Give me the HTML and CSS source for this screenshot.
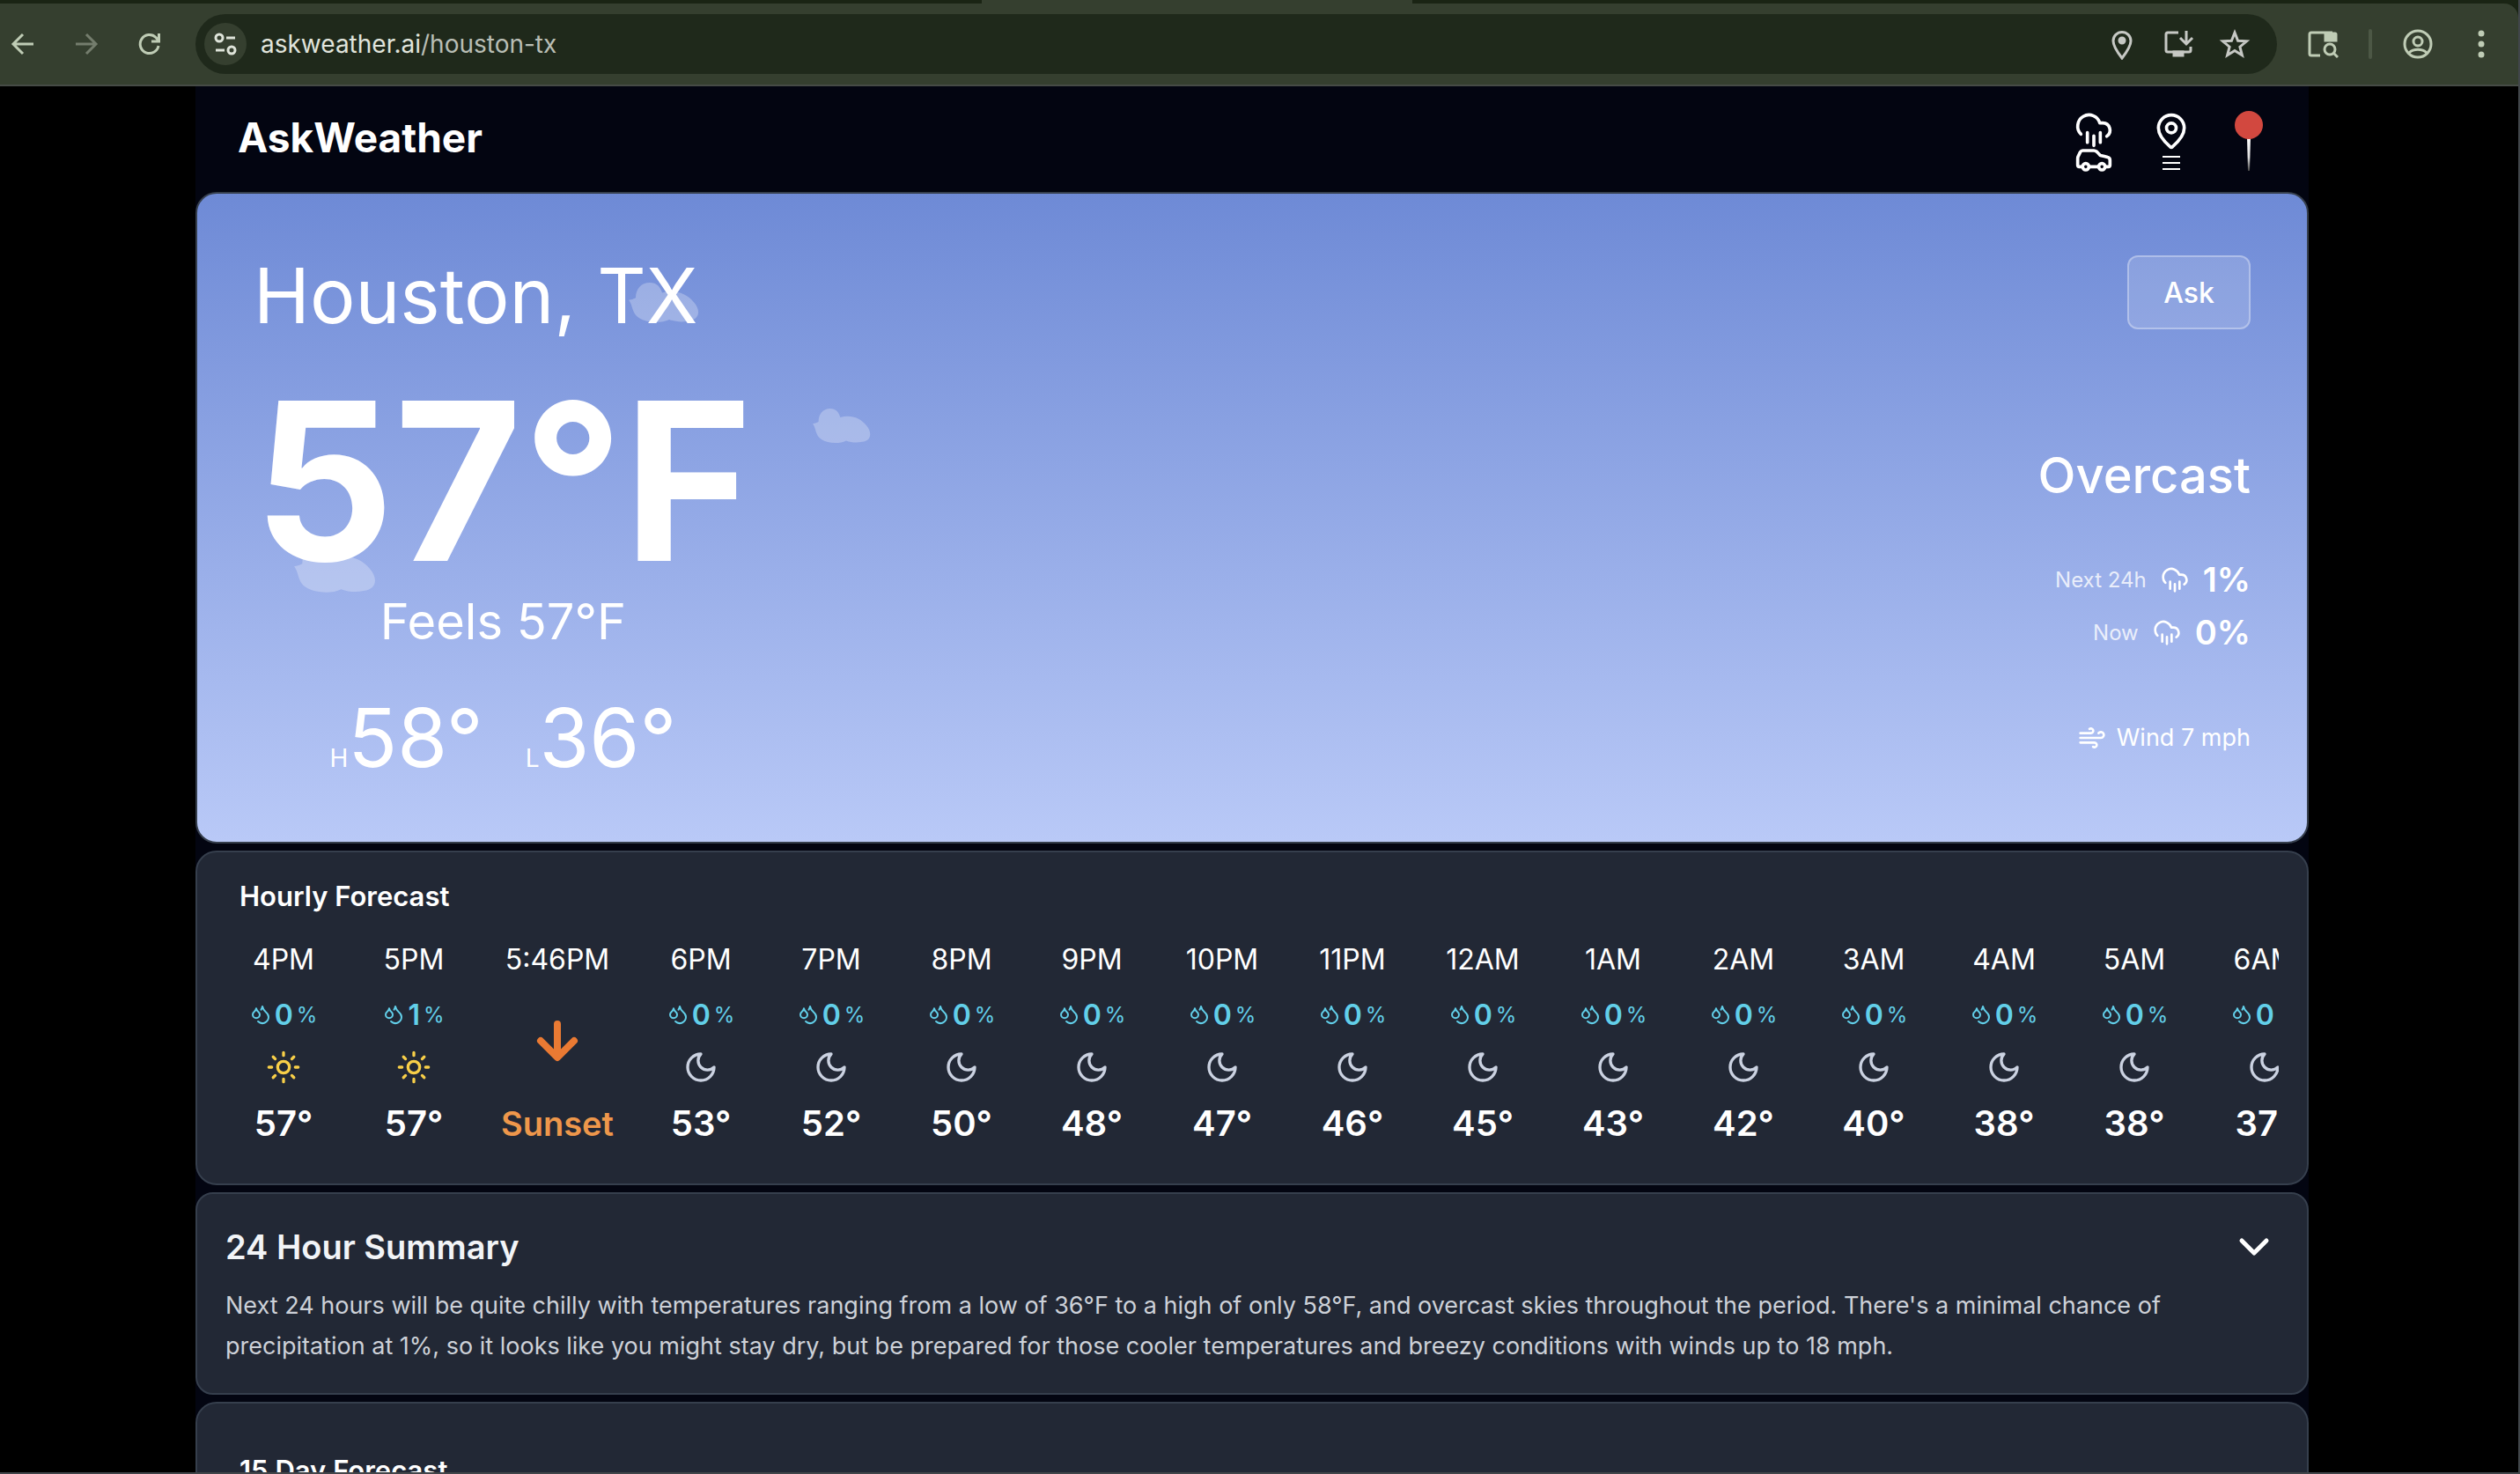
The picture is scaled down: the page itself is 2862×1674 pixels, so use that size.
FILE: index.html
```html
<!DOCTYPE html>
<html lang="en">
<head>
<meta charset="utf-8">
<title>AskWeather - Houston, TX</title>
<link rel="stylesheet" href="styles.css">
</head>
<body>
<svg class="sprite" aria-hidden="true">
  <symbol id="rain" viewBox="0 0 24 24"><path d="M4 14.899A7 7 0 1 1 15.71 8h1.79a4.5 4.5 0 0 1 2.5 8.242M16 14v6M8 14v6M12 16v6"/></symbol>
  <symbol id="drops" viewBox="0 0 24 24"><path d="M7 16.3c2.2 0 4-1.83 4-4.05 0-1.16-.57-2.26-1.71-3.19S7.29 6.75 7 5.3c-.29 1.45-1.14 2.84-2.29 3.76S3 11.1 3 12.25c0 2.22 1.8 4.05 4 4.05zM12.56 6.6A10.97 10.97 0 0 0 14 3.02c.5 2.5 2 4.9 4 6.5s3 3.5 3 5.5a6.98 6.98 0 0 1-11.91 4.97"/></symbol>
  <symbol id="sun" viewBox="0 0 24 24"><circle cx="12" cy="12" r="4"/><path d="M12 2v2M12 20v2M4.93 4.93l1.41 1.41M17.66 17.66l1.41 1.41M2 12h2M20 12h2M6.34 17.66l-1.41 1.41M19.07 4.93l-1.41 1.41"/></symbol>
  <symbol id="moon" viewBox="0 0 24 24"><path d="M12 3a6 6 0 0 0 9 9 9 9 0 1 1-9-9Z"/></symbol>
  <symbol id="cloud" viewBox="0 0 80 56" preserveAspectRatio="none"><path d="M0 24Q4 24 8 21C8 9 14 0 24 0C32 0 36 6 38 14C52 9 66 15 74 27C82 38 81 51 68 53C60 55 53 54 46 51C36 57 20 55 12 49C3 42 5 31 0 24Z"/></symbol>
</svg>

<div class="browser">
  <div class="tabstrip"><span class="tab"></span></div>
  <nav class="toolbar" aria-label="Browser">
    <button class="tool" aria-label="Back"><svg viewBox="0 0 32 32"><path d="M28 16H6M16 5L5 16l11 11"/></svg></button>
    <button class="tool dim" aria-label="Forward"><svg viewBox="0 0 32 32"><path d="M4 16h22M16 5l11 11-11 11"/></svg></button>
    <button class="tool reload" aria-label="Reload"><svg viewBox="0 0 32 32"><path d="M26 18A10.500 10.500 0 1 1 23 8.500L26 12M26.500 4v9H18"/></svg></button>
    <div class="omnibox">
      <button class="site" aria-label="Site information"><svg viewBox="0 0 32 32"><circle cx="9" cy="9" r="4"/><path d="M17 9h10M5 23h10"/><circle cx="23" cy="23" r="4"/></svg></button>
      <span class="url">askweather.ai<span class="path">/houston-tx</span></span>
      <button class="tool grey" aria-label="Location"><svg viewBox="0 0 36 36"><path d="M18 34C11 25 8 20 8 14.500a10 10 0 0 1 20 0C28 20 25 25 18 34Z"/><circle class="solid" cx="18" cy="14" r="3"/></svg></button>
      <button class="tool grey" aria-label="Install"><svg viewBox="0 0 36 36"><path d="M18 5H6a2 2 0 0 0-2 2v18a2 2 0 0 0 2 2h24a2 2 0 0 0 2-2v-4M27 3v13M20 11l7 7 7-7"/><path class="solid" d="M13 27h10v4H13z"/></svg></button>
      <button class="tool grey" aria-label="Bookmark"><svg viewBox="0 0 36 36"><path d="M18 5l3.600 9.200 9.900.6-7.600 6.400 2.500 9.600L18 25.500l-8.400 5.300 2.500-9.600-7.600-6.400 9.900-.6z"/></svg></button>
    </div>
    <button class="tool side" aria-label="Search page"><svg viewBox="0 0 36 36"><path d="M15 31H5a2 2 0 0 1-2-2V7a2 2 0 0 1 2-2h24"/><path class="solid" d="M21 6h11a1 1 0 0 1 1 1v7H21z"/><circle cx="26" cy="24" r="6"/><path d="M30 28l5 5"/></svg></button>
    <span class="divider"></span>
    <button class="tool profile" aria-label="Profile"><svg viewBox="0 0 36 36"><circle cx="18" cy="18" r="15"/><circle cx="18" cy="15" r="5"/><path d="M8 28c5-5 15-5 20 0"/></svg></button>
    <button class="tool more" aria-label="Menu"><svg viewBox="0 0 36 36"><circle class="solid" cx="18" cy="6" r="2"/><circle class="solid" cx="18" cy="18" r="2"/><circle class="solid" cx="18" cy="30" r="2"/></svg></button>
  </nav>
</div>

<div class="page">
<main class="app">
  <header class="top">
    <h1>AskWeather</h1>
    <div class="actions">
      <button aria-label="Road weather"><svg class="rainy"><use href="#rain"/></svg><svg class="car" viewBox="0 6 24 14"><path d="M19 17h2c.6 0 1-.4 1-1v-3c0-.9-.7-1.700-1.500-1.900C18.700 10.600 16 10 16 10s-1.300-1.400-2.200-2.300c-.5-.4-1.100-.7-1.800-.7H5c-.6 0-1.100.4-1.400.9l-1.400 2.900A3.700 3.700 0 0 0 2 12v4c0 .6.4 1 1 1h2M9 17h6"/><circle cx="7" cy="17" r="2"/><circle cx="17" cy="17" r="2"/></svg></button>
      <button aria-label="Saved places"><svg class="place" viewBox="0 0 24 24"><path d="M20 10c0 4.993-5.539 10.193-7.399 11.799a1 1 0 0 1-1.202 0C9.539 20.193 4 14.993 4 10a8 8 0 0 1 16 0"/><circle cx="12" cy="10" r="3"/></svg><svg class="lines" viewBox="0 0 20 16"><path d="M0 1h20M0 8h20M0 15h20"/></svg></button>
      <button aria-label="Current place"><svg class="pin" viewBox="0 0 32 70"><defs><linearGradient id="needle" x1="0" y1="0" x2="0" y2="1"><stop offset="0" stop-color="#fff"/><stop offset=".6" stop-color="#ddd"/><stop offset="1" stop-color="#444"/></linearGradient></defs><path fill="url(#needle)" d="M14 31h4l-1 38h-2z"/><circle cx="16" cy="17" r="16" fill="#d2483f"/></svg></button>
    </div>
  </header>

  <section class="card hero">
    <svg class="drift a"><use href="#cloud"/></svg>
    <svg class="drift b"><use href="#cloud"/></svg>
    <svg class="drift c"><use href="#cloud"/></svg>
    <div class="row">
      <h2>Houston, TX</h2>
      <button class="ask">Ask</button>
    </div>
    <div class="row now">
      <div class="temps">
        <div class="temp">57°F</div>
        <div class="feels">Feels 57°F</div>
        <div class="range"><span><small>H</small>58°</span><span><small>L</small>36°</span></div>
      </div>
      <div class="cond">
        <div class="sky">Overcast</div>
        <div class="rains">
          <div class="chance"><span>Next 24h</span><svg><use href="#rain"/></svg><b>1%</b></div>
          <div class="chance"><span>Now</span><svg><use href="#rain"/></svg><b>0%</b></div>
        </div>
        <div class="wind"><svg viewBox="0 0 24 24"><path d="M12.800 19.600A2 2 0 1 0 14 16H2M17.500 8a2.500 2.500 0 1 1 2 4H2M9.800 4.400A2 2 0 1 1 11 8H2"/></svg>Wind 7 mph</div>
      </div>
    </div>
  </section>

  <section class="card hourly">
    <h3>Hourly Forecast</h3>
    <ol class="hours">
      <li><time>4PM</time><span class="pop"><svg><use href="#drops"/></svg><b>0</b><i>%</i></span><svg class="sun"><use href="#sun"/></svg><strong>57°</strong></li>
      <li><time>5PM</time><span class="pop"><svg><use href="#drops"/></svg><b>1</b><i>%</i></span><svg class="sun"><use href="#sun"/></svg><strong>57°</strong></li>
      <li class="sunset"><time>5:46PM</time><svg viewBox="0 0 48 48"><path d="M24 5v37M5 24l19 19 19-19"/></svg><strong>Sunset</strong></li>
      <li><time>6PM</time><span class="pop"><svg><use href="#drops"/></svg><b>0</b><i>%</i></span><svg class="moon"><use href="#moon"/></svg><strong>53°</strong></li>
      <li><time>7PM</time><span class="pop"><svg><use href="#drops"/></svg><b>0</b><i>%</i></span><svg class="moon"><use href="#moon"/></svg><strong>52°</strong></li>
      <li><time>8PM</time><span class="pop"><svg><use href="#drops"/></svg><b>0</b><i>%</i></span><svg class="moon"><use href="#moon"/></svg><strong>50°</strong></li>
      <li><time>9PM</time><span class="pop"><svg><use href="#drops"/></svg><b>0</b><i>%</i></span><svg class="moon"><use href="#moon"/></svg><strong>48°</strong></li>
      <li><time>10PM</time><span class="pop"><svg><use href="#drops"/></svg><b>0</b><i>%</i></span><svg class="moon"><use href="#moon"/></svg><strong>47°</strong></li>
      <li><time>11PM</time><span class="pop"><svg><use href="#drops"/></svg><b>0</b><i>%</i></span><svg class="moon"><use href="#moon"/></svg><strong>46°</strong></li>
      <li><time>12AM</time><span class="pop"><svg><use href="#drops"/></svg><b>0</b><i>%</i></span><svg class="moon"><use href="#moon"/></svg><strong>45°</strong></li>
      <li><time>1AM</time><span class="pop"><svg><use href="#drops"/></svg><b>0</b><i>%</i></span><svg class="moon"><use href="#moon"/></svg><strong>43°</strong></li>
      <li><time>2AM</time><span class="pop"><svg><use href="#drops"/></svg><b>0</b><i>%</i></span><svg class="moon"><use href="#moon"/></svg><strong>42°</strong></li>
      <li><time>3AM</time><span class="pop"><svg><use href="#drops"/></svg><b>0</b><i>%</i></span><svg class="moon"><use href="#moon"/></svg><strong>40°</strong></li>
      <li><time>4AM</time><span class="pop"><svg><use href="#drops"/></svg><b>0</b><i>%</i></span><svg class="moon"><use href="#moon"/></svg><strong>38°</strong></li>
      <li><time>5AM</time><span class="pop"><svg><use href="#drops"/></svg><b>0</b><i>%</i></span><svg class="moon"><use href="#moon"/></svg><strong>38°</strong></li>
      <li><time>6AM</time><span class="pop"><svg><use href="#drops"/></svg><b>0</b><i>%</i></span><svg class="moon"><use href="#moon"/></svg><strong>37°</strong></li>
    </ol>
  </section>

  <section class="card summary">
    <div class="row">
      <h3>24 Hour Summary</h3>
      <button class="fold" aria-label="Collapse summary"><svg viewBox="0 0 48 48"><path d="M10 17l14 14 14-14"/></svg></button>
    </div>
    <p>Next 24 hours will be quite chilly with temperatures ranging from a low of 36°F to a high of only 58°F, and overcast skies throughout the period. There's a minimal chance of precipitation at 1%, so it looks like you might stay dry, but be prepared for those cooler temperatures and breezy conditions with winds up to 18 mph.</p>
  </section>

  <section class="card days">
    <h3>15 Day Forecast</h3>
  </section>
</main>
</div>
</body>
</html>
```
FILE: styles.css
```css
* { box-sizing: border-box; margin: 0; padding: 0; }
html, body { height: 100%; }
body {
  display: flex;
  flex-direction: column;
  overflow: hidden;
  border: solid #41464a;
  border-width: 0 2px 2px 0;
  background: #000;
  color: #fff;
  font-family: Inter, "Liberation Sans", sans-serif;
}
button { font: inherit; color: inherit; background: none; border: 0; }
svg { display: block; flex: none; fill: none; stroke: currentColor; stroke-width: 2; stroke-linecap: round; stroke-linejoin: round; }
.sprite { position: absolute; width: 0; height: 0; }

/* Browser chrome */
.browser { flex: none; background: #1a2414; }
.tabstrip { display: flex; height: 4px; padding-left: 39%; }
.tab { width: 28%; background: #353f2f; }
.toolbar {
  display: flex;
  align-items: center;
  height: 94px;
  padding: 0 24px 0 10px;
  background: #353f2f;
  border-bottom: 2px solid #464b46;
  border-radius: 0 16px 0 0;
  color: #bfccb5;
}
.tool { width: 32px; margin-right: 40px; }
.tool svg { width: 32px; height: 32px; stroke-width: 3; stroke-linecap: butt; stroke-linejoin: miter; }
.tool.dim { color: #747d6d; }
.reload { margin-right: 36px; }
.solid { fill: currentColor; }
.omnibox {
  display: flex;
  flex: 1;
  align-items: center;
  height: 68px;
  padding: 0 30px 0 10px;
  border-radius: 34px;
  background: #1f291b;
}
.site { display: grid; place-items: center; width: 48px; height: 48px; border-radius: 50%; background: #353f2f; color: #dfe4da; }
.site svg { width: 32px; height: 32px; stroke-width: 3; stroke-linecap: butt; }
.url { flex: 1; padding-left: 16px; font-size: 28px; color: #e0e4dc; }
.path { color: #b9beb5; }
.omnibox .tool { width: 36px; margin: 0 0 0 28px; color: #c6c8c4; }
.omnibox .tool svg, .side svg, .profile svg, .more svg { width: 36px; height: 36px; }
.side { width: 36px; margin: 0 0 0 34px; }
.divider { width: 4px; height: 34px; margin: 0 34px; border-radius: 2px; background: #4c5745; }
.profile { width: 36px; margin: 0 36px 0 0; }
.more { width: 36px; margin: 0; }

/* Page */
.page { flex: 1; min-height: 0; overflow: hidden; padding-right: 16px; }
.app { max-width: 2400px; min-height: 100%; margin: 0 auto; background: #030511; }
.row { display: flex; justify-content: space-between; align-items: flex-start; }
.top { display: flex; justify-content: space-between; align-items: center; height: 120px; padding: 4px 48px 0; }
.top h1 { margin-bottom: 8px; font-size: 46px; line-height: 56px; font-weight: 700; }
.actions { display: flex; gap: 48px; }
.actions button { display: flex; flex-direction: column; align-items: center; justify-content: center; width: 40px; height: 80px; }
.rainy { width: 44px; height: 44px; }
.car { width: 44px; height: 26px; }
.place { width: 44px; height: 44px; }
.lines { width: 20px; height: 16px; margin-top: 6px; stroke-linecap: butt; }
.pin { width: 32px; height: 70px; stroke: none; }

.card { margin-bottom: 8px; border: 2px solid #363f4d; border-radius: 24px; background: #222835; }
.hero {
  position: relative;
  height: 740px;
  padding: 64px;
  background: linear-gradient(#6e8ad6, #b9c9f7);
}
.hero .row { position: relative; }
.drift { position: absolute; fill: #ffffff44; stroke: none; }
.drift.a { width: 80px; height: 46px; left: 490px; top: 101px; }
.drift.b { width: 66px; height: 40px; left: 699px; top: 244px; }
.drift.c { width: 93px; height: 54px; left: 110px; top: 400px; }
.hero h2 { font-size: 86px; line-height: 104px; font-weight: 400; }
.ask { width: 140px; height: 84px; margin-top: 6px; border: 2px solid #ffffff50; border-radius: 12px; background: #ffffff26; font-size: 32px; font-weight: 500; }
.now { margin-top: 32px; }
.temps { display: flex; flex-direction: column; align-items: center; }
.temp { font-size: 250px; line-height: 252px; font-weight: 700; }
.feels { font-size: 56px; line-height: 68px; }
.range { display: flex; gap: 48px; margin-top: 50px; font-size: 92px; line-height: 96px; }
.range small { font-size: 28px; }
.cond { display: flex; flex-direction: column; align-items: flex-end; padding-top: 84px; }
.sky { font-size: 56px; line-height: 72px; font-weight: 500; }
.rains { display: grid; justify-items: end; gap: 4px; margin-top: 54px; }
.chance { display: flex; align-items: center; gap: 16px; height: 56px; }
.chance span { font-size: 24px; color: #ffffffcc; }
.chance svg, .wind svg { width: 32px; height: 32px; }
.chance b { font-size: 38px; font-weight: 600; }
.wind { display: flex; align-items: center; gap: 12px; margin-top: 72px; font-size: 27px; line-height: 40px; }

.hourly { height: 380px; padding: 30px 32px; }
.hourly h3, .days h3 { padding-left: 16px; font-size: 31px; line-height: 40px; font-weight: 600; }
.hours { display: flex; gap: 40px; overflow: hidden; padding-left: 12px; margin-top: 32px; list-style: none; }
.hours li { display: flex; flex: none; flex-direction: column; align-items: center; width: 108px; }
.hours time { font-size: 32px; line-height: 40px; }
.pop { display: flex; align-items: center; gap: 4px; height: 40px; margin-top: 22px; color: #62cfe9; }
.pop svg { width: 24px; height: 24px; }
.pop b { font-size: 32px; font-weight: 600; }
.pop i { font-size: 24px; font-style: normal; }
.hours .sun, .hours .moon { width: 40px; height: 40px; margin-top: 20px; }
.sun { color: #f8cf48; }
.moon { color: #cbd2e1; }
.hours strong { margin-top: 20px; font-size: 40px; line-height: 48px; font-weight: 600; }
.hours .sunset { width: 138px; }
.sunset svg { width: 48px; height: 48px; margin: 48px 0 26px; stroke-width: 8; color: #ea7a33; }
.hours .sunset strong { font-size: 38px; color: #ee974b; }

.summary { padding: 32px 32px 30px; border-radius: 20px; }
.summary h3 { font-size: 38px; line-height: 56px; font-weight: 600; color: #f2f4f7; }
.fold { width: 48px; height: 48px; margin: 4px 4px 0 0; }
.fold svg { width: 48px; height: 48px; stroke-width: 5; }
.summary p { margin-top: 16px; font-size: 27px; line-height: 46px; color: #cdd1d8; }
.days { height: 380px; padding: 56px 32px; }
```
